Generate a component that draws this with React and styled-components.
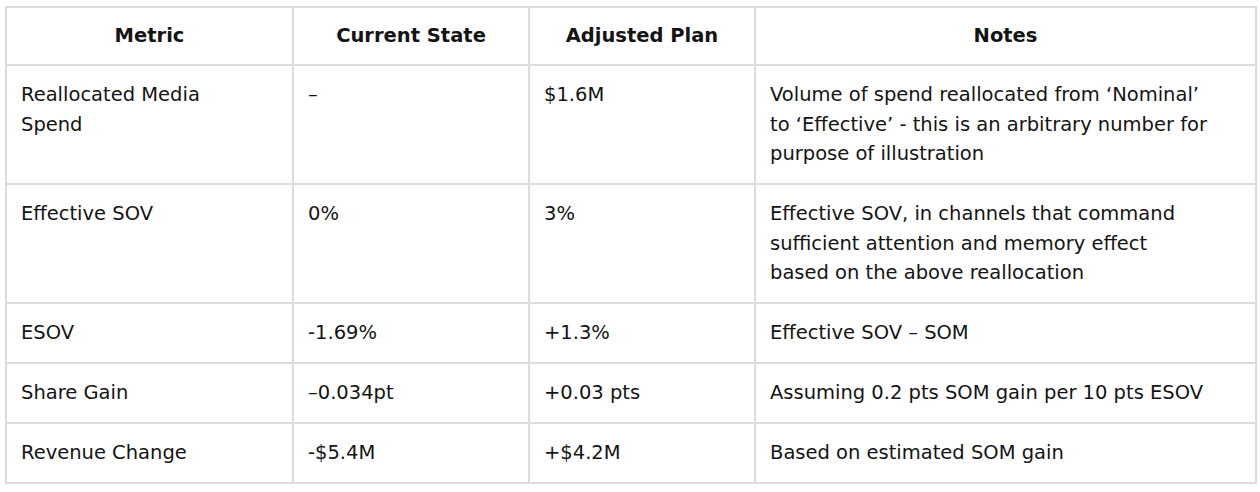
import React from 'react';
import styled, { createGlobalStyle } from 'styled-components';

const GlobalStyle = createGlobalStyle`
  body {
    margin: 0;
    background: #fff;
    font-family: "DejaVu Sans", "Noto Sans", sans-serif;
    color: #141414;
  }
`;

const Page = styled.div`
  padding: 6px 5px;
`;

const Table = styled.table`
  width: 1250px;
  table-layout: fixed;
  border-collapse: collapse;
  border: 2px solid #dcdcdc;
  font-size: 19.5px;
  line-height: 29.5px;
`;

const HeadCell = styled.th`
  border: 2px solid #dcdcdc;
  padding: 13px 14px;
  font-weight: 700;
  text-align: center;
  vertical-align: middle;
`;

// padRight narrows the text box so lines break where the design breaks them
const Cell = styled.td`
  border: 2px solid #dcdcdc;
  padding: 14.5px ${p => p.$padRight || 14}px 14px 14px;
  text-align: left;
  vertical-align: top;
  font-weight: 400;
`;

const columns = [
  { title: 'Metric', width: 287 },
  { title: 'Current State', width: 236 },
  { title: 'Adjusted Plan', width: 226 },
  { title: 'Notes', width: 501 },
];

const rows = [
  {
    metric: 'Reallocated Media Spend',
    current: '–',
    plan: '$1.6M',
    notes: 'Volume of spend reallocated from ‘Nominal’ to ‘Effective’ - this is an arbitrary number for purpose of illustration',
    tall: true,
  },
  {
    metric: 'Effective SOV',
    current: '0%',
    plan: '3%',
    notes: 'Effective SOV, in channels that command sufficient attention and memory effect based on the above reallocation',
  },
  { metric: 'ESOV', current: '-1.69%', plan: '+1.3%', notes: 'Effective SOV – SOM' },
  { metric: 'Share Gain', current: '–0.034pt', plan: '+0.03 pts', notes: 'Assuming 0.2 pts SOM gain per 10 pts ESOV' },
  { metric: 'Revenue Change', current: '-$5.4M', plan: '+$4.2M', notes: 'Based on estimated SOM gain' },
];

export default function App() {
  return (
    <Page>
      <GlobalStyle />
      <Table>
        <colgroup>
          {columns.map(c => <col key={c.title} style={{ width: c.width }} />)}
        </colgroup>
        <thead>
          <tr>
            {columns.map(c => <HeadCell key={c.title}>{c.title}</HeadCell>)}
          </tr>
        </thead>
        <tbody>
          {rows.map(r => (
            <tr key={r.metric}>
              <Cell $padRight={60}>{r.metric}</Cell>
              <Cell>{r.current}</Cell>
              <Cell>{r.plan}</Cell>
              <Cell $padRight={45}>{r.notes}</Cell>
            </tr>
          ))}
        </tbody>
      </Table>
    </Page>
  );
}
